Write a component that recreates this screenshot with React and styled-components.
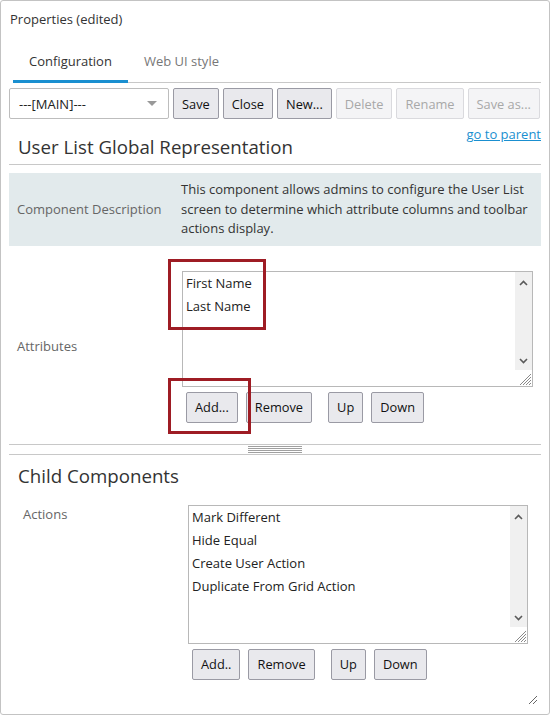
import React from 'react';
import styled, { createGlobalStyle } from 'styled-components';

const Global = createGlobalStyle`
  html, body { margin: 0; padding: 0; background: #fff; }
  body {
    font-family: "Open Sans", "Noto Sans", sans-serif;
    font-size: 13px;
    color: #333;
  }
  * { box-sizing: border-box; }
`;

const Panel = styled.div`
  position: relative;
  width: 550px;
  height: 715px;
  border: 1px solid #c3c3c3;
  border-radius: 3px;
  padding: 0 8px;
  display: flex;
  flex-direction: column;
`;

const Title = styled.div`
  padding: 9px 0 0 1px;
  line-height: 18px;
  color: #333;
`;

const TabBar = styled.div`
  display: flex;
  margin-left: 4px;
  border-bottom: 1px solid #c8c8c8;
`;

const Tab = styled.div`
  padding: 24px 16px 10px;
  line-height: 18px;
  margin-bottom: -1px;
  color: ${(p) => (p.$active ? '#333' : '#777')};
  border-bottom: 3px solid ${(p) => (p.$active ? '#1a8fd0' : 'transparent')};
`;

const Toolbar = styled.div`
  display: flex;
  gap: 4px;
  margin-top: 5px;
  height: 31px;
`;

const Select = styled.div`
  flex: none;
  width: 160px;
  height: 31px;
  border: 1px solid #bdbdbd;
  border-radius: 2px;
  background: #fff;
  display: flex;
  align-items: center;
  justify-content: space-between;
  padding: 0 11px 0 9px;
  color: #222;
`;

const Caret = styled.span`
  width: 0;
  height: 0;
  border-left: 5px solid transparent;
  border-right: 5px solid transparent;
  border-top: 5px solid #999;
`;

const Button = styled.button`
  flex: none;
  font-family: inherit;
  font-size: 12.8px;
  white-space: nowrap;
  height: 31px;
  padding: 0 8px;
  border-radius: 2px;
  border: 1px solid ${(p) => (p.disabled ? '#dadade' : '#9a9aa4')};
  background: ${(p) => (p.disabled ? '#f4f4f6' : '#e9e9ed')};
  color: ${(p) => (p.disabled ? '#a8a8a8' : '#111')};
  margin-left: ${(p) => p.$gapLeft || 0}px;
  cursor: default;
`;

const HeaderBlock = styled.div`
  display: grid;
`;

const ParentLink = styled.a`
  grid-area: 1 / 1;
  justify-self: end;
  align-self: start;
  margin-top: 7px;
  line-height: 16px;
  color: #1a8fd0;
  text-decoration: underline;
  position: relative;
  z-index: 1;
`;

const Heading = styled.h2`
  grid-area: 1 / 1;
  margin: ${(p) => p.$top}px 0 0;
  padding: 0 0 ${(p) => (p.$ruled ? 5 : 0)}px 9px;
  font-size: 18.7px;
  font-weight: 400;
  line-height: 24px;
  color: #333;
  border-bottom: ${(p) => (p.$ruled ? '1px solid #c8c8c8' : 'none')};
`;

const DescBox = styled.div`
  margin-top: 8px;
  background: #e2eaec;
  display: grid;
  grid-template-columns: 164px 1fr;
  padding: 7px 8px;
  line-height: 19.5px;
`;

const Label = styled.div`
  color: #666;
  align-self: ${(p) => (p.$top ? 'start' : 'center')};
  padding-left: ${(p) => p.$indent}px;
  margin-top: ${(p) => p.$lift || 0}px;
  line-height: ${(p) => (p.$top ? '18px' : 'inherit')};
`;

const DescText = styled.div`
  color: #333;
  white-space: nowrap;
`;

const FieldRow = styled.div`
  margin-top: ${(p) => p.$top}px;
  display: grid;
  grid-template-columns: ${(p) => p.$labelWidth}px 1fr;
  padding-right: ${(p) => p.$right}px;
`;

const Field = styled.div`
  position: relative;
  display: flex;
  flex-direction: column;
`;

const ListBox = styled.div`
  position: relative;
  height: ${(p) => p.$height}px;
  border: 1px solid #b8b8b8;
  background: #fff;
  padding: 0 20px 0 3px;
  overflow: hidden;
`;

const ListItem = styled.div`
  line-height: 23px;
  color: #222;
  white-space: nowrap;
`;

const ScrollTrack = styled.div`
  position: absolute;
  top: 0;
  right: 0;
  bottom: 16px;
  width: 17px;
  background: #f0f0f0;
  display: flex;
  flex-direction: column;
  justify-content: space-between;
  align-items: center;
  padding: 8px 0 6px;
`;

const Grip = styled.svg`
  position: absolute;
  right: ${(p) => p.$r}px;
  bottom: ${(p) => p.$b}px;
`;

const ButtonRow = styled.div`
  display: flex;
  gap: 8px;
  margin-top: 5px;
  padding-left: 4px;
`;

const Annotation = styled.div`
  position: absolute;
  left: ${(p) => p.$x}px;
  top: ${(p) => p.$y}px;
  width: ${(p) => p.$w}px;
  height: ${(p) => p.$h}px;
  border: 3px solid #9e1c24;
  pointer-events: none;
`;

const Splitter = styled.div`
  margin-top: 21px;
  height: 11px;
  border-top: 1px solid #c8c8c8;
  border-bottom: 1px solid #c8c8c8;
  display: flex;
  justify-content: center;
  align-items: center;
`;

const SplitGrip = styled.div`
  width: 54px;
  height: 7px;
  background: repeating-linear-gradient(#a0a0a0 0 1px, transparent 1px 2px);
`;

const PanelGrip = styled.svg`
  position: absolute;
  right: 12px;
  bottom: 10px;
`;

const Chevron = ({ up }) => (
  <svg width="9" height="6" viewBox="0 0 9 6">
    <polyline
      points={up ? '1,5 4.5,1.5 8,5' : '1,1 4.5,4.5 8,1'}
      fill="none"
      stroke="#5a5a5a"
      strokeWidth="1.6"
    />
  </svg>
);

const ResizeGrip = ({ r, b }) => (
  <Grip $r={r} $b={b} width="12" height="12" viewBox="0 0 12 12">
    <g stroke="#8a8a8a" strokeWidth="1">
      <line x1="1" y1="12" x2="12" y2="1" />
      <line x1="4" y1="12" x2="12" y2="4" />
      <line x1="7" y1="12" x2="12" y2="7" />
      <line x1="10" y1="12" x2="12" y2="10" />
    </g>
  </Grip>
);

const List = ({ items, height }) => (
  <ListBox $height={height}>
    {items.map((t) => (
      <ListItem key={t}>{t}</ListItem>
    ))}
    <ScrollTrack>
      <Chevron up />
      <Chevron />
    </ScrollTrack>
    <ResizeGrip r={1} b={1} />
  </ListBox>
);

const ListButtons = ({ addLabel }) => (
  <ButtonRow>
    <Button>{addLabel}</Button>
    <Button>Remove</Button>
    <Button $gapLeft={8}>Up</Button>
    <Button>Down</Button>
  </ButtonRow>
);

export default function App() {
  return (
    <>
      <Global />
      <Panel>
        <Title>Properties (edited)</Title>
        <TabBar>
          <Tab $active>Configuration</Tab>
          <Tab>Web UI style</Tab>
        </TabBar>
        <Toolbar>
          <Select>
            <span>---[MAIN]---</span>
            <Caret />
          </Select>
          <Button>Save</Button>
          <Button>Close</Button>
          <Button>New...</Button>
          <Button disabled>Delete</Button>
          <Button disabled>Rename</Button>
          <Button disabled>Save as...</Button>
        </Toolbar>
        <HeaderBlock>
          <ParentLink href="#">go to parent</ParentLink>
          <Heading $top={16} $ruled>
            User List Global Representation
          </Heading>
        </HeaderBlock>
        <DescBox>
          <Label $indent={0}>Component Description</Label>
          <DescText>
            This component allows admins to configure the User List
            <br />
            screen to determine which attribute columns and toolbar
            <br />
            actions display.
          </DescText>
        </DescBox>
        <FieldRow $top={25} $labelWidth={173} $right={8}>
          <Label $indent={8} $lift={-2}>
            Attributes
          </Label>
          <Field>
            <List items={['First Name', 'Last Name']} height={116} />
            <ListButtons addLabel="Add..." />
            <Annotation $x={-14} $y={-12} $w={98} $h={71} />
            <Annotation $x={-14} $y={107} $w={83} $h={56} />
          </Field>
        </FieldRow>
        <Splitter>
          <SplitGrip />
        </Splitter>
        <Heading $top={9}>Child Components</Heading>
        <FieldRow $top={17} $labelWidth={179} $right={13}>
          <Label $indent={14} $top>
            Actions
          </Label>
          <Field>
            <List
              items={[
                'Mark Different',
                'Hide Equal',
                'Create User Action',
                'Duplicate From Grid Action',
              ]}
              height={139}
            />
            <ListButtons addLabel="Add.." />
          </Field>
        </FieldRow>
        <PanelGrip width="9" height="9" viewBox="0 0 9 9">
          <g stroke="#666" strokeWidth="1">
            <line x1="1" y1="9" x2="9" y2="1" />
            <line x1="5" y1="9" x2="9" y2="5" />
          </g>
        </PanelGrip>
      </Panel>
    </>
  );
}
